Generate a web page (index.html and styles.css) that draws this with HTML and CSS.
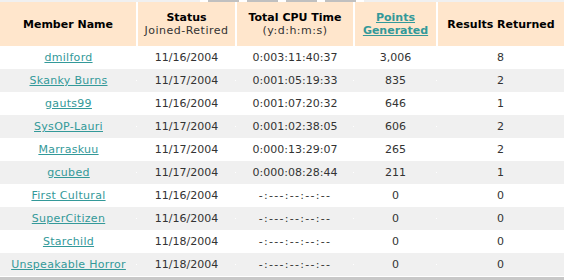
FILE: index.html
```html
<!DOCTYPE html>
<html>
<head>
<meta charset="utf-8">
<link rel="stylesheet" href="styles.css">
</head>
<body>
<div class="strip">
  <span class="s-light s1"></span>
  <span class="s-white s2"></span>
  <span class="s-tab"></span>
  <span class="s-white s3"></span>
  <span class="s-tab"></span>
  <span class="s-white s3"></span>
  <span class="s-tab"></span>
  <span class="s-white s3"></span>
  <span class="s-tab"></span>
  <span class="s-white s2"></span>
  <span class="s-light s4"></span>
</div>
<table class="members">
  <colgroup>
    <col class="c1"><col class="c2"><col class="c3"><col class="c4"><col class="c5">
  </colgroup>
  <thead>
    <tr>
      <th>Member Name</th>
      <th>Status<br><span class="sub">Joined-Retired</span></th>
      <th>Total CPU Time<br><span class="sub">(y:d:h:m:s)</span></th>
      <th><a href="#">Points<br>Generated</a></th>
      <th>Results Returned</th>
    </tr>
  </thead>
  <tbody>
    <tr><td><a href="#">dmilford</a></td><td>11/16/2004</td><td>0:003:11:40:37</td><td>3,006</td><td>8</td></tr>
    <tr class="alt"><td><a href="#">Skanky Burns</a></td><td>11/17/2004</td><td>0:001:05:19:33</td><td>835</td><td>2</td></tr>
    <tr><td><a href="#">gauts99</a></td><td>11/16/2004</td><td>0:001:07:20:32</td><td>646</td><td>1</td></tr>
    <tr class="alt"><td><a href="#">SysOP-Lauri</a></td><td>11/17/2004</td><td>0:001:02:38:05</td><td>606</td><td>2</td></tr>
    <tr><td><a href="#">Marraskuu</a></td><td>11/17/2004</td><td>0:000:13:29:07</td><td>265</td><td>2</td></tr>
    <tr class="alt"><td><a href="#">gcubed</a></td><td>11/17/2004</td><td>0:000:08:28:44</td><td>211</td><td>1</td></tr>
    <tr><td><a href="#">First Cultural</a></td><td>11/16/2004</td><td><span class="na">-:---:--:--:--</span></td><td>0</td><td>0</td></tr>
    <tr class="alt"><td><a href="#">SuperCitizen</a></td><td>11/16/2004</td><td><span class="na">-:---:--:--:--</span></td><td>0</td><td>0</td></tr>
    <tr><td><a href="#">Starchild</a></td><td>11/18/2004</td><td><span class="na">-:---:--:--:--</span></td><td>0</td><td>0</td></tr>
    <tr class="alt"><td><a href="#">Unspeakable Horror</a></td><td>11/18/2004</td><td><span class="na">-:---:--:--:--</span></td><td>0</td><td>0</td></tr>
  </tbody>
</table>
<div class="foot"></div>
</body>
</html>
```
FILE: styles.css
```css
html, body {
  margin: 0;
  padding: 0;
  background: #ffffff;
}
body {
  font-family: "DejaVu Sans", Verdana, sans-serif;
  font-size: 11px;
  color: #333333;
}
.strip {
  display: flex;
  height: 2px;
}
.strip span { display: block; height: 2px; }
.s-light { background: #f0f0f0; }
.s-white { background: #ffffff; }
.s-tab { background: #c0c0c0; width: 31px; }
.s1 { width: 200px; }
.s2 { width: 8px; }
.s3 { width: 8px; }
.s4 { flex: 1; }

.members {
  width: 564px;
  border-collapse: collapse;
  table-layout: fixed;
}
.c1 { width: 137px; }
.c2 { width: 99px; }
.c3 { width: 118px; }
.c4 { width: 83px; }
.c5 { width: 127px; }

.members th {
  background: #ffe6cc;
  height: 44px;
  padding: 0;
  border-right: 2px solid #ffffff;
  font-weight: bold;
  color: #000000;
  line-height: 13px;
  text-align: center;
  vertical-align: middle;
}
.members th:last-child { border-right: 0; }
.members th .sub {
  font-weight: normal;
  color: #333333;
  letter-spacing: 0.5px;
}
.members th a { color: #339999; }
.members td {
  height: 23px;
  padding: 0;
  text-align: center;
  vertical-align: middle;
  position: relative;
  line-height: 13px;
}
.members tr.alt td { background: #f0f0f0; }
.members tr.alt td:not(:last-child)::after {
  content: "";
  position: absolute;
  right: -1px;
  top: 11px;
  width: 2px;
  height: 1px;
  background: #ffffff;
}
.members td a {
  color: #339999;
  letter-spacing: 0.3px;
}
.na {
  letter-spacing: 1.3px;
}
.foot {
  height: 4px;
  background: #c8c8c8;
  margin-top: 1px;
}
```
